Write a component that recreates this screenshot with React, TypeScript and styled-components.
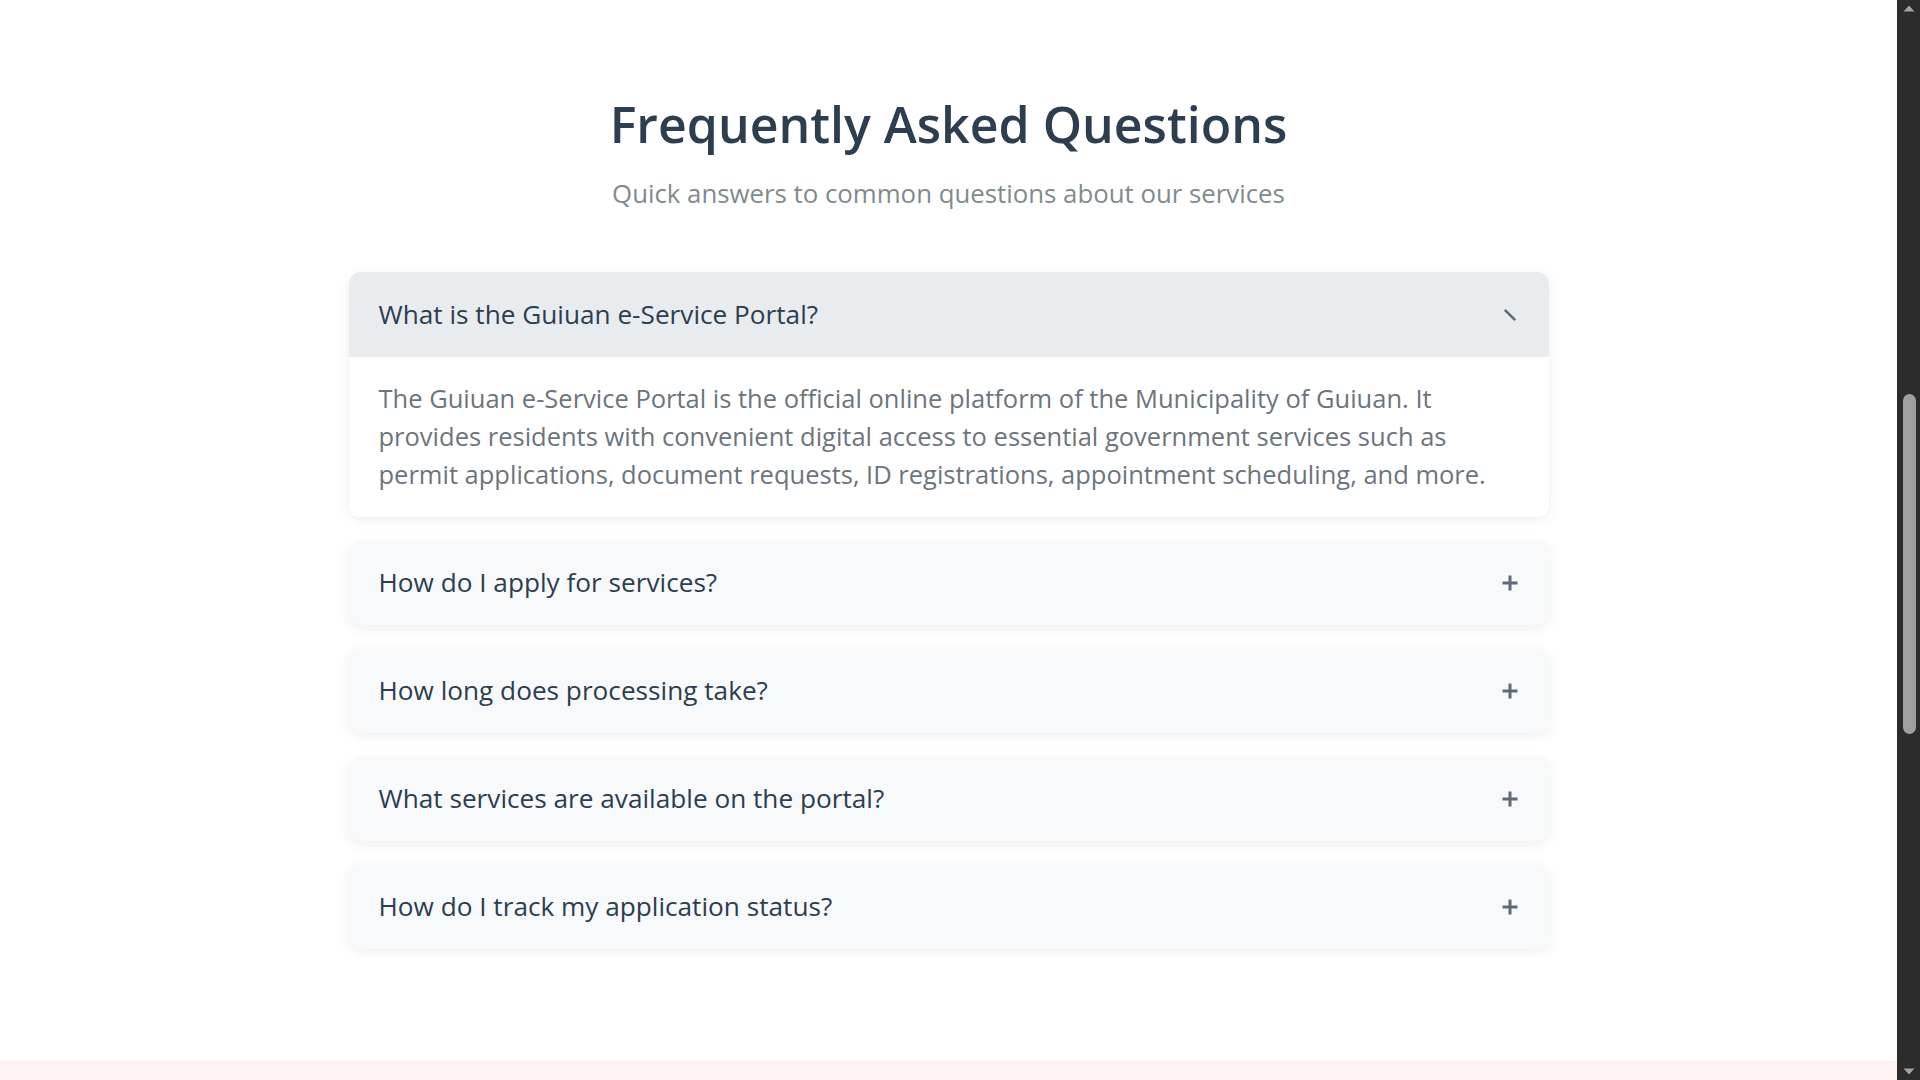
import React from "react";
import styled, { createGlobalStyle } from "styled-components";

const GlobalStyle = createGlobalStyle`
  * { box-sizing: border-box; }
  html, body {
    margin: 0;
    padding: 0;
    height: 100%;
    overflow: hidden;
    background: #ffffff;
  }
  body {
    font-family: "Open Sans", "Noto Sans", "Liberation Sans", sans-serif;
    color: #2c3e50;
  }
`;

const Page = styled.div`
  display: flex;
  width: 100vw;
  height: 100vh;
`;

const Main = styled.main`
  flex: 1;
  min-width: 0;
  display: flex;
  flex-direction: column;
  overflow: hidden;
  background: #ffffff;
`;

const FaqSection = styled.section`
  padding: 94px 20px 111px;
  display: flex;
  flex-direction: column;
  align-items: center;
`;

const Title = styled.h2`
  margin: 0;
  font-size: 50px;
  line-height: 60px;
  font-weight: 600;
  color: #2c3e50;
  text-align: center;
  letter-spacing: 0;
`;

const Subtitle = styled.p`
  margin: 21px 0 0;
  font-size: 25.8px;
  line-height: 36px;
  font-weight: 400;
  color: #7f8c8d;
  text-align: center;
`;

const List = styled.div`
  margin-top: 61px;
  width: 100%;
  max-width: 1200px;
  display: flex;
  flex-direction: column;
  gap: 24px;
`;

const Card = styled.div<{ $open: boolean }>`
  border-radius: 12px;
  overflow: hidden;
  background: ${(p) => (p.$open ? "#ffffff" : "#f8f9fa")};
  box-shadow: 0 3px 12px rgba(0, 0, 0, 0.07);
`;

const Header = styled.div<{ $open: boolean }>`
  display: flex;
  align-items: center;
  justify-content: space-between;
  padding: ${(p) => (p.$open ? "24px 30px" : "23px 30px 24px")};
  background: ${(p) => (p.$open ? "#e9ecef" : "#f8f9fa")};
  cursor: pointer;
`;

const Question = styled.h3`
  margin: 0;
  font-size: 26.2px;
  line-height: 37px;
  font-weight: 500;
  color: #2c3e50;
`;

const IconBox = styled.span`
  flex: none;
  width: 18px;
  height: 18px;
  display: flex;
  align-items: center;
  justify-content: center;
  color: #5f6b78;
`;

const Answer = styled.div`
  padding: 22px 30px 24px;
  background: #ffffff;
`;

const AnswerText = styled.p`
  margin: 0;
  font-size: 25.5px;
  line-height: 38px;
  font-weight: 400;
  color: #6c757d;
`;

const Footer = styled.footer`
  flex: none;
  height: 240px;
  background: #fef3f2;
`;

const Scrollbar = styled.aside`
  flex: none;
  width: 23px;
  height: 100%;
  background: #2c2c2c;
  display: flex;
  flex-direction: column;
  align-items: center;
`;

const ArrowBtn = styled.div`
  flex: none;
  height: 17px;
  width: 100%;
  display: flex;
  align-items: center;
  justify-content: center;
`;

const Track = styled.div`
  flex: 1;
  width: 100%;
  display: flex;
  flex-direction: column;
  align-items: center;
`;

const Thumb = styled.div`
  margin-top: 377px;
  width: 13px;
  height: 340px;
  border-radius: 7px;
  background: #9f9f9f;
  margin-left: 1px;
`;

const PlusIcon = () => (
  <svg width="18" height="18" viewBox="0 0 18 18" aria-hidden="true">
    <path d="M9 1.5v15M1.5 9h15" stroke="currentColor" strokeWidth="3" fill="none" />
  </svg>
);

const OpenIcon = () => (
  <svg width="18" height="18" viewBox="0 0 18 18" aria-hidden="true">
    <path d="M3.8 3.8L14.2 14.2" stroke="currentColor" strokeWidth="2.6" fill="none" />
  </svg>
);

const ArrowUp = () => (
  <svg width="12" height="7" viewBox="0 0 12 7" aria-hidden="true">
    <path d="M6 0.5L11.5 6.5H0.5Z" fill="#a3a3a3" />
  </svg>
);

const ArrowDown = () => (
  <svg width="12" height="7" viewBox="0 0 12 7" aria-hidden="true">
    <path d="M0.5 0.5H11.5L6 6.5Z" fill="#a3a3a3" />
  </svg>
);

type Faq = { q: string; a?: string };

const faqs: Faq[] = [
  {
    q: "What is the Guiuan e-Service Portal?",
    a: "The Guiuan e-Service Portal is the official online platform of the Municipality of Guiuan. It provides residents with convenient digital access to essential government services such as permit applications, document requests, ID registrations, appointment scheduling, and more.",
  },
  { q: "How do I apply for services?" },
  { q: "How long does processing take?" },
  { q: "What services are available on the portal?" },
  { q: "How do I track my application status?" },
];

export default function App() {
  return (
    <Page>
      <GlobalStyle />
      <Main>
        <FaqSection>
          <Title>Frequently Asked Questions</Title>
          <Subtitle>Quick answers to common questions about our services</Subtitle>
          <List>
            {faqs.map((f, i) => {
              const open = i === 0;
              return (
                <Card key={f.q} $open={open}>
                  <Header $open={open}>
                    <Question>{f.q}</Question>
                    <IconBox>{open ? <OpenIcon /> : <PlusIcon />}</IconBox>
                  </Header>
                  {open && f.a && (
                    <Answer>
                      <AnswerText>{f.a}</AnswerText>
                    </Answer>
                  )}
                </Card>
              );
            })}
          </List>
        </FaqSection>
        <Footer />
      </Main>
      <Scrollbar>
        <ArrowBtn>
          <ArrowUp />
        </ArrowBtn>
        <Track>
          <Thumb />
        </Track>
        <ArrowBtn>
          <ArrowDown />
        </ArrowBtn>
      </Scrollbar>
    </Page>
  );
}
